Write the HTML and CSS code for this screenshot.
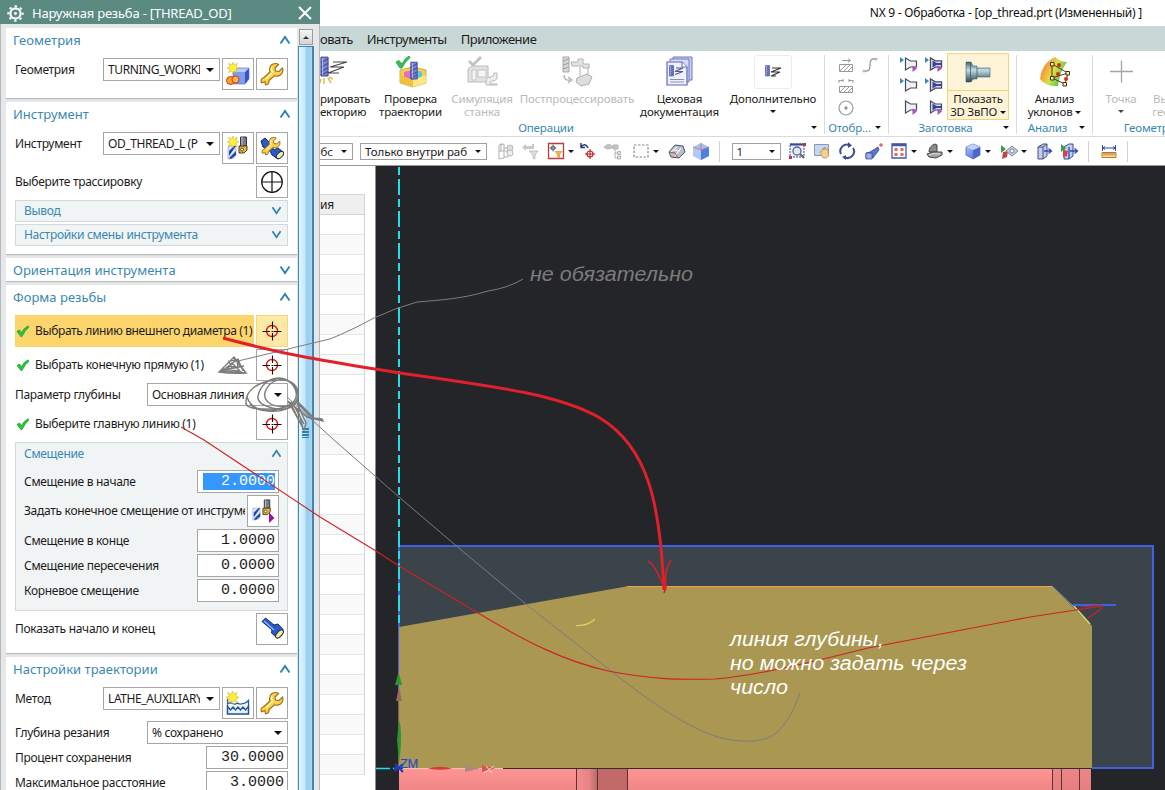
FILE: index.html
```html
<!DOCTYPE html>
<html lang="ru">
<head>
<meta charset="utf-8">
<title>NX 9 - Обработка</title>
<link rel="stylesheet" href="styles.css">
</head>
<body>
<svg class="defs" width="0" height="0">
  <defs>
    <linearGradient id="gPink" x1="0" y1="0" x2="0" y2="1"><stop offset="0" stop-color="#ff9494"/><stop offset="1" stop-color="#ee8686"/></linearGradient>
    <linearGradient id="gDark" x1="0" y1="0" x2="1" y2="0"><stop offset="0" stop-color="#f58c8c"/><stop offset=".6" stop-color="#e88484"/><stop offset="1" stop-color="#b86a6a"/></linearGradient>
    <linearGradient id="gSteel" x1="0" y1="0" x2="0" y2="1"><stop offset="0" stop-color="#3c6272"/><stop offset=".4" stop-color="#c4dde6"/><stop offset="1" stop-color="#2c4a5a"/></linearGradient>
    <linearGradient id="gRain" x1="0" y1="0" x2="1" y2=".5"><stop offset="0" stop-color="#e8503a"/><stop offset=".35" stop-color="#f5a83c"/><stop offset=".6" stop-color="#d8e04a"/><stop offset="1" stop-color="#3cc050"/></linearGradient>
    <linearGradient id="gCube" x1="0" y1="0" x2="1" y2="1"><stop offset="0" stop-color="#a9c6fa"/><stop offset="1" stop-color="#4660d8"/></linearGradient>
    <symbol id="up" viewBox="0 0 12 10"><path d="M1.500 8.500 6 2l4.500 6.500" fill="none" stroke="#2c83b0" stroke-width="1.900"/></symbol>
    <symbol id="down" viewBox="0 0 12 10"><path d="M1.500 1.500 6 8l4.500-6.500" fill="none" stroke="#2c83b0" stroke-width="1.900"/></symbol>
    <symbol id="check" viewBox="0 0 14 12"><path d="M1 6.500 3.500 5l2 2.500Q8 3 12 .8L13 2Q8.500 6 6 11.500H4.800Z" fill="#2fc43c" stroke="#149a28" stroke-width=".7"/></symbol>
    <symbol id="target" viewBox="0 0 20 20"><circle cx="10" cy="10" r="5.500" fill="none" stroke="#d81818" stroke-width="1.400"/><path d="M10.500 .5V8M10.500 12v7.500M.5 10.500H8M12 10.500h7.500M9.500 10.500h2" stroke="#111" stroke-width="1.100"/></symbol>
    <symbol id="wrench" viewBox="0 0 24 24"><path d="M12 2.500Q16 .5 18.500 2.500L15 6l.5 3 3.500.5 3.500-3.500Q24 10 20.500 13q-3 2-6 .8L9 18.500q.5 4-3.500 4.300l-.5-3-3.500 1Q0 17 4 15.500L10 10Q8.500 5 12 2.500Z" fill="#f8d04c" stroke="#9a6a14" stroke-width="1.100"/><path d="M12 5q-1.500 3 .8 5L6 17" fill="none" stroke="#fff6b0" stroke-width="1.300"/></symbol>
    <symbol id="star" viewBox="0 0 14 14"><path d="M7 0 8.300 3.500 12 1.500 10.500 5.200 14 7 10.500 8.300 12 12.300 8.300 10.500 7 14 5.500 10.500 1.800 12.300 3.500 8.300 0 7 3.500 5.500 1.800 1.500 5.500 3.500Z" fill="#ffef3a" stroke="#b9a22a" stroke-width=".5"/></symbol>
    <symbol id="geom" viewBox="0 0 24 24"><path d="M7 10 12 6h11l-4 4Z" fill="#b7ccf8"/><path d="M7 10h12v12H7Z" fill="#7d9cf0"/><path d="M19 10l4-4v11l-4 5Z" fill="#3d50c8"/><path d="M7 10 12 6h11v11l-4 5H7Z" fill="none" stroke="#5065c0" stroke-width=".6"/><circle cx="4.500" cy="18.500" r="4" fill="#f8a02c" stroke="#c8381c"/><circle cx="9.500" cy="17.500" r="3.500" fill="#ffb840" stroke="#c8381c"/><use href="#star" x="1" y="0" width="12" height="12"/></symbol>
    <symbol id="tool" viewBox="0 0 24 24"><path d="M2 10h8v9q-1 4-6 4H2Z" fill="#dbe6fa" stroke="#7d8fb5" stroke-width=".5"/><path d="M3 15 8 10h2L3 20ZM3 22l7-7v4l-5 4Z" fill="#2345a8"/><path d="M14.500 1h6v9h-6Z" fill="#777c86" stroke="#30343c"/><path d="M16 1v9" stroke="#c7cad0"/><path d="M13 10h8v4l-3 3h-5Z" fill="#f0b82e" stroke="#4e3a14"/><circle cx="16" cy="13.500" r="1.500" fill="#fff" stroke="#333" stroke-width=".8"/></symbol>
    <symbol id="toolnew" viewBox="0 0 24 24"><use href="#tool" width="24" height="24"/><use href="#star" x="1" y="0" width="12" height="12"/></symbol>
    <symbol id="toolend" viewBox="0 0 24 24"><use href="#tool" width="22" height="22"/><path d="M18 13.500 23.500 19 18 24Z" fill="#a010a0"/></symbol>
    <symbol id="torch" viewBox="0 0 24 24"><path d="M2 4.500 5.500 1 14 8l4-1 5 5.500q1 6-6 8.500l-5.500-5 .5-3Z" fill="#2c58c8" stroke="#122a70"/><path d="M4 4 14 13" stroke="#8fb4f8" stroke-width="1.500"/><ellipse cx="19.500" cy="17" rx="2.500" ry="5" transform="rotate(42 19.500 17)" fill="#f6ee90" stroke="#1a2a60"/></symbol>
    <symbol id="torchwrench" viewBox="0 0 24 24"><path d="M1 5 5 2l5 5 4 7 4-2 5 4q0 5-5 7l-6-4-2-4-7-4Z" fill="#2c58c8" stroke="#122a70"/><ellipse cx="20" cy="19" rx="2.500" ry="4.500" transform="rotate(45 20 19)" fill="#f6ee90" stroke="#1a2a60"/><use href="#wrench" x="1" y="0" width="20" height="20"/></symbol>
    <symbol id="method" viewBox="0 0 24 24"><path d="M1.500 8v5q2.500-2 5-.5 2.500 1.500 5-.5 2.500 2 5 .5 3 .5 6-3V14" fill="none" stroke="#285a9a" stroke-width="1.300"/><path d="M1.500 14.500h21V23h-21Z" fill="#e6f2fc"/><path d="M1.500 14v9h21v-9" fill="none" stroke="#1f4f96" stroke-width="1.500"/><path d="M2 16l2.500 3L7 16l2.500 3 2.500-3 2.500 3 2.500-3 2.500 3 2.500-3" fill="none" stroke="#1f4f96" stroke-width="1.400"/><use href="#star" x="0" y="0" width="13" height="13"/></symbol>
    <symbol id="gear" viewBox="0 0 16 16"><circle cx="8" cy="8" r="4.800" fill="none" stroke="#fff" stroke-width="2"/><circle cx="8" cy="8" r="1.300" fill="#fff"/><circle cx="8" cy="8" r="6.800" fill="none" stroke="#fff" stroke-width="1.800" stroke-dasharray="2.300 3.040" stroke-dashoffset="1.100"/></symbol>
    <symbol id="mill" viewBox="0 0 10 24"><path d="M1 1h8v21H1Z" fill="#7482d0" stroke="#343c88"/><path d="M1 7 9 3M1 12l8-4M1 17l8-4M1 21l8-4" stroke="#3a4288" stroke-width="1.100"/><path d="M3 2v19" stroke="#c0c8f4"/></symbol>
    <symbol id="part" viewBox="0 0 18 16"><path d="M5.500 2v12l5-3h6V5h-6Z" fill="#eff1f3" stroke="#444c5c" stroke-width="1.200"/><path d="M0 1l4 3-4 3Z" fill="#3f88b4"/></symbol>
    <symbol id="pfill" viewBox="0 0 18 16"><path d="M5.500 2v12l5-3h6V5h-6Z" fill="#d9ddf2" stroke="#444c5c" stroke-width="1.200"/><path d="M7.500 4.500v7l4-2.500h5V7h-5Z" fill="#3940a0"/></symbol>
    <symbol id="out" viewBox="0 0 18 16"><path d="M12.500 9.500 17 12.500 12.500 16Z" fill="#b04cc0"/></symbol>
    <symbol id="shape" viewBox="0 0 18 16"><path d="M5.500 2v12l5-3h6V5h-6Z" fill="#eff1f3" stroke="#444c5c" stroke-width="1.200"/></symbol>
  </defs>
</svg>

<main class="app">
  <aside class="dialog">
    <header class="dlg-title"><svg width="17" height="17"><use href="#gear"/></svg><span>Наружная резьба - [THREAD_OD]</span><svg class="close" width="14" height="14" viewBox="0 0 14 14"><path d="M1 1l12 12M13 1 1 13" stroke="#fff" stroke-width="2"/></svg></header>
    <div class="dlg-body">
      <div class="cards">
        <section class="card">
          <h2><span>Геометрия</span><svg width="12" height="10"><use href="#up"/></svg></h2>
          <div class="row"><label>Геометрия</label><div class="select mid"><span>TURNING_WORKI</span><i class="caret"></i></div><button><svg><use href="#geom"/></svg></button><button><svg><use href="#wrench"/></svg></button></div>
        </section>
        <section class="card">
          <h2><span>Инструмент</span><svg width="12" height="10"><use href="#up"/></svg></h2>
          <div class="row"><label>Инструмент</label><div class="select mid"><span>OD_THREAD_L (P</span><i class="caret"></i></div><button><svg><use href="#toolnew"/></svg></button><button><svg><use href="#torchwrench"/></svg></button></div>
          <div class="row center"><label>Выберите трассировку</label><button><svg viewBox="0 0 24 24"><circle cx="12" cy="12" r="10.300" fill="none" stroke="#111" stroke-width="1.200"/><path d="M12 1.500v21M1.500 12h21" stroke="#111" stroke-width="1.200"/></svg></button></div>
          <div class="fold"><span>Вывод</span><svg width="11" height="9"><use href="#down"/></svg></div>
          <div class="fold"><span>Настройки смены инструмента</span><svg width="11" height="9"><use href="#down"/></svg></div>
        </section>
        <section class="card folded">
          <h2><span>Ориентация инструмента</span><svg width="12" height="10"><use href="#down"/></svg></h2>
        </section>
        <section class="card">
          <h2><span>Форма резьбы</span><svg width="12" height="10"><use href="#up"/></svg></h2>
          <div class="row center active"><label><svg class="ok"><use href="#check"/></svg>Выбрать линию внешнего диаметра (1)</label><button><svg class="tg"><use href="#target"/></svg></button></div>
          <div class="row center"><label><svg class="ok"><use href="#check"/></svg>Выбрать конечную прямую (1)</label><button><svg class="tg"><use href="#target"/></svg></button></div>
          <div class="row"><label>Параметр глубины</label><div class="select wide"><span>Основная линия</span><i class="caret"></i></div></div>
          <div class="row center"><label><svg class="ok"><use href="#check"/></svg>Выберите главную линию (1)</label><button><svg class="tg"><use href="#target"/></svg></button></div>
          <div class="sub">
            <h3><span>Смещение</span><svg width="11" height="9"><use href="#up"/></svg></h3>
            <div class="row"><label>Смещение в начале</label><div class="num sel"><span>2.0000</span></div></div>
            <div class="row center"><label class="clip">Задать конечное смещение от инструме</label><button><svg><use href="#toolend"/></svg></button></div>
            <div class="row"><label>Смещение в конце</label><div class="num">1.0000</div></div>
            <div class="row"><label>Смещение пересечения</label><div class="num">0.0000</div></div>
            <div class="row"><label>Корневое смещение</label><div class="num">0.0000</div></div>
          </div>
          <div class="row center"><label>Показать начало и конец</label><button><svg><use href="#torch"/></svg></button></div>
        </section>
        <section class="card last">
          <h2><span>Настройки траектории</span><svg width="12" height="10"><use href="#up"/></svg></h2>
          <div class="row"><label>Метод</label><div class="select mid"><span>LATHE_AUXILIARY</span><i class="caret"></i></div><button><svg><use href="#method"/></svg></button><button><svg><use href="#wrench"/></svg></button></div>
          <div class="row"><label>Глубина резания</label><div class="select wide"><span>% сохранено</span><i class="caret"></i></div></div>
          <div class="row"><label>Процент сохранения</label><div class="num">30.0000</div></div>
          <div class="row"><label>Максимальное расстояние</label><div class="num">3.0000</div></div>
        </section>
      </div>
      <div class="scroll"><div class="sb-up"><i></i></div><div class="thumb"><div class="grip"></div></div></div>
    </div>
  </aside>

  <div class="work">
    <header class="win-title">NX 9 - Обработка - [op_thread.prt (Измененный) ]</header>
    <nav class="menu"><span>овать</span><span>Инструменты</span><span>Приложение</span></nav>
    <div class="ribbon">
      <section class="group g-ops">
        <div class="tiles">
          <div class="tile first"><svg width="34" height="34" viewBox="0 0 34 34"><use href="#mill" x="0" y="1" width="9" height="22"/><path d="M13 7h14L10 12h14L8 18h11" fill="none" stroke="#444" stroke-width="1.100"/><path d="M1 24l-1 4M4 23v6M8 23l3 5M9 22l4 2" stroke="#d8c050" stroke-width="1.500"/></svg><span>рировать<br>екторию</span></div>
          <div class="tile"><svg width="34" height="34" viewBox="0 0 34 34"><path d="M6 15l12-3 14 3v13l-13 4-13-4Z" fill="#f3d34a" stroke="#b8962c" stroke-width=".7"/><path d="M10 17l8-2 10 2v8l-9 2-9-2Z" fill="#e070c0"/><path d="M18 15l10 2v8l-9 1Z" fill="#5cc8dc"/><path d="M6 20l13 5v7L6 28Z" fill="#f0c23c"/><path d="M19 25l13-5v8l-13 4Z" fill="#ffe684"/><use href="#mill" x="16" y="6" width="8" height="20"/><path d="M2 7l3-1.500L8 9Q11 3 15 1l1 1.500Q10 8 8 13H6Z" fill="#34c254" stroke="#1a9a38" stroke-width=".8"/></svg><span>Проверка<br>траектории</span></div>
          <div class="tile off"><svg width="34" height="34" viewBox="0 0 34 34"><path d="M3 14l4-3h16v16H3Z" fill="#e2e2e2" stroke="#bcbcbc"/><path d="M7 15h4v10H7ZM13 15h8v7h-8Z" fill="#f6f6f6" stroke="#c4c4c4"/><path d="M21 27q0-5 5-5 3 0 3-4h3v4q0 4-5 4-2 0-2 3h7v1H21Z" fill="#eee" stroke="#b8b8b8"/><path d="M4 6l4 4 8-8" fill="none" stroke="#c2c2c2" stroke-width="3"/></svg><span>Симуляция<br>станка</span></div>
          <div class="tile off"><svg width="34" height="34" viewBox="0 0 34 34"><path d="M3 2h6v15H3Z" fill="#d6d6d6" stroke="#a8a8a8"/><path d="M3 6l6-2M3 10l6-2M3 14l6-2" stroke="#a0a0a0"/><path d="M11 7h7V4h5v5h6v4h-6v-2H12ZM20 12v9M28 13v7" fill="#e4e4e4" stroke="#b0b0b0"/><path d="M17 23l10-4 5 3-3 7-8 2-5-4Z" fill="#ddd" stroke="#b0b0b0"/><path d="M4 20q0 6 6 5M8 22l4 3-4 3" fill="none" stroke="#b4b4b4" stroke-width="1.500"/></svg><span>Постпроцессировать</span></div>
          <div class="tile"><svg width="34" height="34" viewBox="0 0 34 34"><path d="M10 2h19v23H10Z" fill="#c9cdf4" stroke="#7278bc"/><path d="M7 4h19v23H7Z" fill="#d9dcf8" stroke="#7278bc"/><path d="M4 7h15l5 5v18H4Z" fill="#eef0fe" stroke="#6068b4" stroke-width="1.200"/><path d="M19 7v5h5" fill="#fff" stroke="#6068b4"/><use href="#mill" x="6" y="10" width="5" height="12"/><path d="M13 13h7l-8 3.500h8l-8 3" fill="none" stroke="#555c88" stroke-width="1.200"/><path d="M7 24.500h14M7 27h14" stroke="#8a90b8"/></svg><span>Цеховая<br>документация</span></div>
          <div class="tile more"><div class="frame"><svg width="18" height="16" viewBox="0 0 18 16"><use href="#mill" x="1" y="1" width="5" height="12"/><path d="M8 4h9L7 8h9l-9 4h5" fill="none" stroke="#333" stroke-width="1.200"/></svg></div><span>Дополнительно</span><i class="caret s"></i></div>
        </div>
        <footer><b>Операции</b><i class="caret s"></i></footer>
      </section>
      <section class="group g-disp">
        <div class="mini disp">
          <svg viewBox="0 0 16 16"><path d="M1.500 7.500h13v7h-13ZM2 14l6-6M6 14l6-6M10 14l4-4M4 3.500h8M10 1.500l2.500 2-2.500 2" fill="none" stroke="#999"/></svg>
          <svg viewBox="0 0 16 16"><path d="M1 14h4q3 0 3-6t3-6h4" fill="none" stroke="#999" stroke-width="1.300"/><circle cx="2" cy="14" r="1.500" fill="#bbb"/><circle cx="14" cy="2" r="1.500" fill="#bbb"/><circle cx="8" cy="8" r="1.300" fill="#bbb"/></svg>
          <svg viewBox="0 0 16 16"><path d="M1.500 8.500h13v6h-13ZM2 14l5-5M6 14l5-5M10 14l4-4M1 5V2M15 5V2M1 2.500h4M11 2.500h4M5 1v3M11 1v3" fill="none" stroke="#999"/></svg><i></i>
          <svg viewBox="0 0 16 16"><circle cx="8" cy="8" r="7" fill="none" stroke="#999" stroke-width="1.200"/><path d="M8 6v4M6 8h4" stroke="#888" stroke-width="1.200"/></svg>
        </div>
        <footer><b>Отобр...</b><i class="caret s"></i></footer>
      </section>
      <section class="group g-blank">
        <div class="blank">
          <div class="mini parts">
            <svg viewBox="0 0 18 16"><use href="#part"/><use href="#out"/></svg><svg viewBox="0 0 18 16"><use href="#part"/><use href="#pfill"/><use href="#out"/></svg>
            <svg viewBox="0 0 18 16"><use href="#part"/></svg><svg viewBox="0 0 18 16"><use href="#part"/><use href="#pfill"/></svg>
            <svg viewBox="0 0 18 16"><use href="#shape"/><use href="#out"/></svg><svg viewBox="0 0 18 16"><use href="#pfill"/><use href="#out"/></svg>
          </div>
          <div class="big"><div class="pic"><svg width="26" height="22" viewBox="0 0 26 22"><path d="M1 1h5l2 4h4v2h13v9H12v2H8l-2 3H1Z" fill="url(#gSteel)" stroke="#3c5e6c" stroke-width=".6"/><path d="M5.500 1v20M12 7v9" stroke="#35505e" stroke-width=".7"/></svg></div><span>Показать<br>3D ЗвПО <i class="caret s"></i></span></div>
        </div>
        <footer><b>Заготовка</b><i class="caret s"></i></footer>
      </section>
      <section class="group g-an">
        <div class="tile"><svg width="34" height="34" viewBox="0 0 34 34"><path d="M2 24Q4 8 17 2q6 5 12 5Q22 16 20 31 8 32 2 24Z" fill="url(#gRain)"/><path d="M14 9l16 9-16 5Zm0 14 13 6 3-11" fill="none" stroke="#5a3020"/><path d="M12.500 7.500h3.500v3.500h-3.500ZM28 16.500h3.500V20H28ZM12.500 21.500h3.500V25h-3.500ZM25 27.500h3.500V31H25Z" fill="#fff3a0" stroke="#403010"/><circle cx="21" cy="10" r="2" fill="#d03020"/><circle cx="20" cy="19" r="2" fill="#d03020"/><circle cx="28" cy="24" r="2" fill="#d03020"/></svg><span>Анализ<br>уклонов <i class="caret s"></i></span></div>
        <footer><b>Анализ</b><i class="caret s"></i></footer>
      </section>
      <section class="group g-geo">
        <div class="tiles2"><div class="tile off"><svg width="34" height="34" viewBox="0 0 34 34"><path d="M17.500 5.500v22M6 16.500h23" stroke="#a4a4a4" stroke-width="1.300"/></svg><span>Точка</span><i class="caret s"></i></div><div class="tile off cut"><svg width="34" height="34"></svg><span>Вы<br>гео</span></div></div>
        <footer><b>Геометрия</b></footer>
      </section>
    </div>
    <div class="toolbar">
      <div class="cell w33 start"><div class="combo c1"><span>ибс</span><i class="caret s"></i></div></div>
      <div class="cell w141"><div class="combo c2"><span>Только внутри раб</span><i class="caret s"></i></div></div>
      <div class="cell w24"><svg viewBox="0 0 20 18"><path d="M3 3l5-1v14l-5 1ZM8 6h4v9H8M3 9h9M5 1v8" fill="none" stroke="#b0b0b0"/><circle cx="14" cy="6" r="3" fill="#ddd" stroke="#b8b8b8"/><circle cx="14" cy="11" r="3" fill="#eee" stroke="#b8b8b8"/></svg></div>
      <div class="cell w24"><svg viewBox="0 0 20 18"><path d="M2 5l4-3v2h6V2h2v5H6v2Z" fill="#c8c8c8"/><path d="M9 9h9l-3 4v4l-2-1v-3Z" fill="#ddd" stroke="#b8b8b8" stroke-width=".8"/></svg></div>
      <div class="cell w36"><svg viewBox="0 0 20 18"><path d="M2.500 1.500h15v15h-15Z" fill="#fff" stroke="#c03a3a" stroke-width="1.300"/><circle cx="7" cy="6" r="2" fill="none" stroke="#555"/><path d="M7 2.500v7M3.500 6h7" stroke="#555" stroke-width=".8"/><path d="M9 9.500h7l-2.500 3v3l-2-1v-2Z" fill="#f5b838" stroke="#c88a20" stroke-width=".6"/></svg><i class="caret s"></i></div>
      <div class="cell w20"><svg viewBox="0 0 20 18"><path d="M3 5q4-5 7 1M3 1v4.500h4" fill="none" stroke="#223a7c" stroke-width="1.500"/><circle cx="12" cy="12" r="3" fill="none" stroke="#d02020" stroke-width="1.200"/><path d="M12 7v10M7 12h10" stroke="#a02020"/></svg></div>
      <div class="cell w30"><svg viewBox="0 0 20 18"><path d="M1 5q5-5 9 0-5 4-9 0ZM10 3h5v4h-5Z" fill="#c4c4c4" stroke="#b4b4b4"/><path d="M12 7v9h3M12 11h3" fill="none" stroke="#b4b4b4"/><path d="M14.500 9.500h3v3h-3ZM14.500 14h3v3h-3Z" fill="#e0e0e0" stroke="#b4b4b4"/></svg></div>
      <div class="cell w33"><svg viewBox="0 0 20 18"><path d="M3 3h14v12H3Z" fill="none" stroke="#888" stroke-width="1.200" stroke-dasharray="2.500 1.500"/></svg><i class="caret s"></i></div>
      <div class="cell w32"><svg viewBox="0 0 20 18"><path d="M2 10l6-7 8 1 2 6-6 6-8-1Z" fill="#b9bfca" stroke="#4b5262"/><path d="M4 10l6-5M8 14l6-8M7 8l6 1" stroke="#fff"/><path d="M2 10l6 1 3 5" fill="none" stroke="#c05050"/></svg></div>
      <div class="cell w15"><svg viewBox="0 0 20 18"><path d="M2 5l8-4 8 4v9l-8 4-8-4Z" fill="#9cc4f2"/><path d="M10 8l8-3v9l-8 4Z" fill="#4e80e0"/><path d="M2 5l8 3v10l-8-4Z" fill="#b4c8f8"/><path d="M2 5l8 3 8-3M10 1v7" fill="none" stroke="#e06868" stroke-width=".8"/></svg></div>
      <div class="cell w22"><i class="vsep"></i></div>
      <div class="cell w52"><div class="combo c3"><span>1</span><i class="caret s"></i></div></div>
      <div class="cell w30"><svg viewBox="0 0 20 18"><path d="M3 2h14v13H3Z" fill="#eef2fb" stroke="#2b4aa0" stroke-dasharray="2 1"/><path d="M3 2.500h14" stroke="#2b4aa0" stroke-width="2"/><circle cx="10" cy="9" r="4" fill="#dbeaf4" stroke="#667" stroke-width="1.300"/><path d="M13 12l4 4" stroke="#667" stroke-width="2"/><path d="M2 14h3v3H2ZM16 1h3v3h-3Z" fill="#c83232"/></svg></div>
      <div class="cell w19"><svg viewBox="0 0 20 18"><path d="M2.500 2.500h14v11h-14Z" fill="#c6d6ee" stroke="#8a98b4"/><path d="M8 10l2-1 1-3 1 2 1-3 1 3 2-2v4l1 4-3 2h-3Z" fill="#f4cf94" stroke="#b98a4c" stroke-width=".7"/></svg></div>
      <div class="cell w32"><svg viewBox="0 0 20 18"><path d="M4 12A6.500 6.500 0 0 1 12 3M16 6a6.500 6.500 0 0 1-8 9.500" fill="none" stroke="#3c508e" stroke-width="2"/><path d="M11 0l4 3.500L11 6ZM9 13v5l-4-3Z" fill="#3c508e"/></svg></div>
      <div class="cell w22"><svg viewBox="0 0 20 18"><path d="M2 11l4-1 8-5 1 3-6 8H2Z" fill="#5a74d4" stroke="#2f4290" stroke-width=".7"/><path d="M2 11h6v6H2Z" fill="#97acf0" stroke="#2f4290" stroke-width=".7"/><path d="M17 1v4M15 3h4" stroke="#d04040"/></svg></div>
      <div class="cell w36"><svg viewBox="0 0 20 18"><path d="M3 2h14v14H3Z" fill="#fff" stroke="#4058a8" stroke-width="1.300"/><path d="M3 3h14" stroke="#4058a8" stroke-width="2.500"/><path d="M5.500 6h3v3h-3ZM11.500 6h3v3h-3ZM5.500 11h3v3h-3ZM11.500 11h3v3h-3Z" fill="#e06a58"/></svg><i class="caret s"></i></div>
      <div class="cell w36"><svg viewBox="0 0 20 18"><path d="M4 10Q4 4 10 2l2 1v7Z" fill="#8c8c8c" stroke="#444"/><path d="M2 12l6-2 9 0v3l-6 3-7-1Z" fill="#a4a4a4" stroke="#444"/><path d="M4 13l5-1.500 6 .5" fill="none" stroke="#e0e0e0"/></svg><i class="caret s"></i></div>
      <div class="cell w40"><svg viewBox="0 0 20 18"><path d="M3 5l7-3 7 3v8l-7 4-7-4Z" fill="url(#gCube)" stroke="#5064b0" stroke-width=".8"/><path d="M10 8l7-3v8l-7 4Z" fill="#4e66c4"/><path d="M3 5l7-3 7 3-7 3Z" fill="#c2d0f8"/></svg><i class="caret s"></i></div>
      <div class="cell w31"><svg viewBox="0 0 20 18"><path d="M2 3l5 4-5 4Z" fill="#38a04a"/><path d="M4 10l5-1-1 6-5 2Z" fill="#c84444"/><path d="M7 9l6-5 6 5-6 5Z" fill="#c8d0e2" stroke="#75809a"/><circle cx="13" cy="9" r="2" fill="#fff" stroke="#75809a"/></svg><i class="caret s"></i></div>
      <div class="cell w32"><svg viewBox="0 0 20 18"><path d="M4 5l5-3h4v12l-4 3H4Z" fill="#c5cee8" stroke="#3f4f80"/><path d="M4 5h5v12M9 5l4-3" fill="none" stroke="#3f4f80"/><path d="M10 9h7M14.500 6.500l3 2.500-3 2.500" fill="none" stroke="#2c48c0" stroke-width="1.300"/></svg></div>
      <div class="cell w19"><svg viewBox="0 0 20 18"><path d="M4 5l5-3h4v12l-4 3H4Z" fill="#c5cee8" stroke="#3f4f80"/><path d="M1 2l5 4-5 4Z" fill="#38a04a"/><path d="M3 8l5 1-1 5-4 1Z" fill="#d04444"/><path d="M9 5v12M10 9h7M14.500 6.500l3 2.500-3 2.500" fill="none" stroke="#2c48c0" stroke-width="1.300"/></svg></div>
      <div class="cell w18"><i class="vsep"></i></div>
      <div class="cell w24"><svg viewBox="0 0 20 18"><path d="M3.500 3v6M16.500 3v6M4 6h12M6 4.500 4 6l2 1.500M14 4.500 16 6l-2 1.500" fill="none" stroke="#2c48a0"/><path d="M3 10.500h14v5H3Z" fill="#f8e08c" stroke="#b87830"/><path d="M5 11v2.500M7 11v2.500M9 11v2.500M11 11v2.500M13 11v2.500M15 11v2.500" stroke="#b04040" stroke-width=".8"/></svg></div>
      <div class="cell w12"><i class="vsep"></i></div>
    </div>
    <div class="stage">
      <div class="nav"><div class="nav-head">ия</div><div class="nav-rows"></div></div>
      <svg class="view" width="789" height="624" viewBox="376 166 789 624">
        <path d="M399 546H1153V768H399Z" fill="#3b444b" stroke="#4160e6" stroke-width="2"/>
        <path d="M399 627 629 586H1052L1092 626V768H399Z" fill="#a99752"/>
        <path d="M627 586.500H1052" stroke="#eba24c" stroke-width="1.200"/>
        <path d="M1052 586 1073 606" stroke="#8592a0"/><path d="M1073 605 1090 624" stroke="#d6dc70" stroke-width="1.500"/>
        <path d="M1073 605H1116" stroke="#4160e6" stroke-width="2"/>
        <path d="M576 625.500Q588 626 595 619" fill="none" stroke="#d6d75c" stroke-width="1.200"/>
        <path d="M399 769H1091V790H399Z" fill="url(#gPink)"/>
        <path d="M577 769H597V790H577Z" fill="url(#gDark)"/><path d="M597 769H627V790H597Z" fill="#c26a6a"/><path d="M1053 769H1091V790H1053Z" fill="#e07c7c" opacity=".6"/>
        <path d="M576.500 769V790M627.500 769V790M597.500 769V790M1052.500 769V790M1061.500 769V790M1079.500 769V790" stroke="#5a3434"/>
        <path d="M399 768.500H1092" stroke="#332e2a"/>
        <path d="M399 546V627" stroke="#4160e6" stroke-width="2"/>
        <path d="M399 167V626" stroke="#22dfe6" stroke-width="2" stroke-dasharray="8 4 16 4"/>
        <path d="M376 768.500H390M393 768.500H397" stroke="#22dfe6" stroke-width="1.500"/>
        <path d="M398.500 690V768" stroke="#80604c"/><path d="M398.500 672 402 685H395Z" fill="#2c9432"/><path d="M399 687 402 701H396Z" fill="#9a6a5c"/><path d="M399 720Q402 728 400.500 750L399 764 397 740Z" fill="#2c9432"/>
        <path d="M399 768.500H503" stroke="#efc4bc"/><path d="M428 768.500Q440 765 452 768.500 440 771 428 768.500Z" fill="#d43c3c"/><path d="M465 765.500 480 768.500 465 772Z" fill="#ad8880"/><path d="M482 765 495 768.500 482 772Z" fill="#e05450"/><path d="M484 773l10-7M486 766l6 7" stroke="#ddd"/>
        <path d="M395 764l8 8M403 764l-8 7M394 768h9" stroke="#1c3cc0" stroke-width="2"/>
        <text class="axis" x="400" y="768" textLength="18" lengthAdjust="spacingAndGlyphs">ZM</text>
      </svg>
    </div>
  </div>

  <svg class="notes" width="1165" height="790" viewBox="0 0 1165 790">
    <g class="grey">
      <path d="M523 279Q508 288 488 291C462 299 440 300 417 302Q395 308 374 318 350 331 330 339 304 345 280 351L238 361"/>
      <path class="dense" d="M219 372 234 357 246 373Q232 374 219 372ZM233 357 246 373 222 371 238 359 243 371M229 366l9 1-1-7-8 1 3 8M224 370l20-4M222 369l18 2-8-8-6 8"/>
      <path class="dense" d="M246 402C246 390 258 382 275 380 292 378 299 386 298 396 296 408 280 414 262 410 252 408 245 407 246 402ZM258 396C260 386 268 378 280 378 291 379 299 389 298 398 297 407 285 412 272 408 264 406 257 402 258 396ZM265 392C270 379 284 376 292 384 300 394 296 404 286 406 273 408 263 402 265 392ZM247 397Q254 418 292 405M250 404q10 10 28 5"/>
      <path d="M287 397 334 440 399 497 460 549 527 605 611 671C650 702 690 729 718 737 740 743 763 743 775 734 789 722 794 708 800 693"/>
      <path class="dense" d="M290 402 304 430 306 423 297 403 312 418 322 419 323 421 307 417 288 401 303 428 299 413 291 402M296 400 312 416M293 404l11 20"/>
    </g>
    <path class="thin" d="M181 427 204 440 320 517 376 551 399 566 478 613C530 644 565 661 608 671 650 679 675 680 715 679 760 675 812 662 868 648L1030 617 1102 606M1081 607 1101 605V609L1088 618"/>
    <path class="thick" d="M223 338C290 356 330 362 400 373 500 387 560 395 600 418 649 448 660 505 664 590"/>
    <path class="tip" d="M648 561Q655 564 665 590L664 593 666 588Q664 570 671 560"/>
    <text class="note dim" x="530" y="281" textLength="163" lengthAdjust="spacingAndGlyphs">не обязательно</text>
    <text class="note" x="730" y="646" textLength="154" lengthAdjust="spacingAndGlyphs">линия глубины,</text>
    <text class="note" x="730" y="670" textLength="237" lengthAdjust="spacingAndGlyphs">но можно задать через</text>
    <text class="note" x="730" y="694" textLength="58" lengthAdjust="spacingAndGlyphs">число</text>
  </svg>
</main>
</body>
</html>
```
FILE: styles.css
```css
* { box-sizing: border-box; }
body { margin: 0; background: #fff; font: 12px/15px "Noto Sans", "Open Sans", sans-serif; color: #1c1c20; letter-spacing: -0.3px; }
.defs { position: absolute; }
.app { position: relative; display: flex; width: 1165px; height: 790px; overflow: hidden; }

/* Operation dialog */
.dialog { width: 320px; flex: none; display: flex; flex-direction: column; background: #e6e7e8; border-right: 1px solid #b4b8ba; }
.dlg-title { height: 24px; flex: none; margin-right: -1px; background: #5b8a83; color: #fff; display: flex; align-items: center; gap: 8px; padding: 2px 8px 0 7px; font-size: 13px; letter-spacing: -0.2px; }
.close { margin-left: auto; }
.dlg-body { flex: 1; min-height: 0; display: flex; gap: 1px; padding: 4px 0 0 5px; border-left: 1px solid #b4b8ba; }
.cards { width: 291px; flex: none; display: flex; flex-direction: column; gap: 4px; overflow: hidden; }
.card { flex: none; background: #fff; padding: 0 9px 8px; display: flex; flex-direction: column; gap: 2px; box-shadow: 0 1px 1px #b8bbbd; }
.card.folded { height: 23px; padding-bottom: 0; }
.card h2 { margin: 0 -3px 4px -2px; height: 24px; flex: none; display: flex; align-items: center; justify-content: space-between; font-weight: 400; font-size: 13px; color: #3a87b0; letter-spacing: 0.02px; }
.card.folded h2 { margin-bottom: 0; }
.row { display: flex; gap: 2px; align-items: flex-start; }
.row label { flex: 1; line-height: 23px; white-space: nowrap; display: flex; align-items: center; }
.row.center { align-items: center; }
.row.center label { line-height: 32px; }
.row label.clip { overflow: hidden; display: block; }
.ok { width: 14px; height: 12px; margin: 0 5px 0 1px; flex: none; }
.row.active label { background: #fcd66c; letter-spacing: -0.36px; }
.active button { background: #fce9a8; border-color: #f4d67c; }
button { width: 32px; height: 32px; flex: none; padding: 0; background: #fff; border: 1px solid #a6a6a6; display: flex; align-items: center; justify-content: center; }
button svg { width: 24px; height: 24px; flex: none; }
button svg.tg { width: 20px; height: 20px; }
.select { height: 23px; flex: none; border: 1px solid #a6a6a6; background: #fff; display: flex; align-items: center; justify-content: space-between; padding: 0 5px 0 4px; }
.select span { overflow: hidden; white-space: nowrap; }
.select.mid { width: 117px; }
.select.mid span { width: 92px; letter-spacing: -0.4px; }
.select.wide { width: 141px; }
.caret { width: 0; height: 0; flex: none; border: 4px solid transparent; border-top-color: #111; border-bottom: 0; display: inline-block; }
.caret.s { border-width: 3px; border-bottom: 0; }
.num { width: 82px; height: 23px; flex: none; border: 1px solid #a6a6a6; background: #fff; padding: 0 3px; font: 15px/21px "Liberation Mono", monospace; letter-spacing: 0; text-align: right; }
.num.sel { padding: 2px 3px 2px 5px; line-height: 17px; }
.num.sel span { display: block; background: #3397fc; color: #fff; }
.fold, .sub { border: 1px solid #d3d9da; background: #f0f4f5; color: #3a87b0; }
.fold { height: 22px; display: flex; align-items: center; justify-content: space-between; padding: 0 5px 1px 8px; }
.sub { height: 169px; padding: 0 8px; display: flex; flex-direction: column; gap: 2px; }
.sub .row { color: #1c1c20; }
.sub h3 { margin: 0 -3px 4px 0; height: 21px; display: flex; align-items: center; justify-content: space-between; font-size: 12px; font-weight: 400; }
.scroll { width: 16px; display: flex; flex-direction: column; align-items: center; gap: 1px; padding-top: 1px; }
.sb-up { width: 14px; height: 16px; flex: none; border: 1px solid #9a9da0; background: linear-gradient(#f6f6f6, #d2d4d6); display: flex; align-items: center; justify-content: center; }
.sb-up i { border: 3px solid transparent; border-top: 0; border-bottom-color: #333; }
.thumb { width: 16px; flex: 1; border: 2px solid #4284ac; border-width: 1px 2px 0 1px; background: linear-gradient(90deg, #e2f5fd, #c4e8fa 45%, #98ccee 60%, #a8d6f2); padding: 381px 3px 0; }
.grip { height: 10px; background: repeating-linear-gradient(#2d7fae 0 2px, transparent 2px 3px); }

/* Main window */
.work { flex: 1; min-width: 0; display: flex; flex-direction: column; }
.win-title { height: 26px; flex: none; text-align: right; padding-right: 23px; line-height: 26px; color: #111; letter-spacing: -0.24px; }
.menu { height: 25px; flex: none; background: #c8d8d6; display: flex; gap: 14px; font-size: 13px; line-height: 26px; letter-spacing: -0.5px; }
.ribbon { height: 86px; flex: none; display: flex; border-bottom: 1px solid #dadada; font-size: 11.5px; overflow: hidden; letter-spacing: -0.15px; }
.group { flex: none; display: flex; flex-direction: column; justify-content: space-between; border-right: 1px solid #dadada; margin: 4px 0 2px; }
.group footer { height: 14px; position: relative; display: flex; justify-content: center; align-items: center; color: #3a87b0; }
.group footer b { font-weight: 400; }
.group footer .caret { position: absolute; right: 7px; top: 6px; }
.g-ops { width: 505px; } .g-disp { width: 64px; } .g-blank { width: 128px; } .g-an { width: 76px; } .g-geo { width: 160px; border: 0; }
.g-ops footer { padding-right: 52px; }
.g-disp footer, .g-blank footer, .g-an footer { padding-right: 14px; }
.g-geo footer { padding-right: 40px; }
.tiles { display: grid; grid-template-columns: 52px 77px 66px 124px 81px 106px; }
.tile { display: flex; flex-direction: column; align-items: center; white-space: nowrap; text-align: center; line-height: 13px; color: #1c1c20; }
.tile span { margin-top: 3px; }
.tile.first { align-items: flex-start; letter-spacing: -0.25px; }
.tile.first span { text-align: left; }
.tile > .caret { margin-top: 5px; }
.tile.off { color: #b9b9b9; }
.tile.off .caret { border-top-color: #444; }
.frame { width: 38px; height: 34px; border: 1px solid #ececec; border-radius: 3px; display: flex; align-items: center; justify-content: center; }
.mini { display: grid; align-items: center; justify-items: center; }
.mini svg { width: 18px; height: 16px; }
.disp { grid-template-columns: 24px 24px; grid-template-rows: 20px 22px 21px; margin-left: 9px; }
.blank { display: flex; margin-top: -2px; height: 68px; }
.parts { grid-template-columns: 24px 26px; grid-template-rows: 21px 22px 22px; margin-left: 8px; align-content: start; }
.big { width: 62px; background: #fdf4d8; border: 1px solid #f0d478; display: flex; flex-direction: column; text-align: center; line-height: 13px; white-space: nowrap; letter-spacing: -0.2px; }
.pic { height: 37px; border-bottom: 1px solid #f0d478; display: flex; align-items: center; justify-content: center; }
.big span { padding-top: 1px; }
.tile .caret, .big .caret { vertical-align: 2px; }
.tiles2 { display: flex; gap: 8px; padding-left: 11px; }
.tile.cut { width: 30px; }
.toolbar { height: 29px; flex: none; display: flex; border-bottom: 1px solid #999; }
.cell { flex: none; display: flex; align-items: center; justify-content: center; gap: 2px; }
.cell.start { justify-content: flex-start; }
.cell svg { width: 20px; height: 18px; flex: none; }
.w12 { width: 12px; } .w15 { width: 15px; } .w18 { width: 18px; } .w19 { width: 19px; } .w20 { width: 20px; } .w22 { width: 22px; }
.w24 { width: 24px; } .w30 { width: 30px; } .w31 { width: 31px; } .w32 { width: 32px; } .w33 { width: 33px; } .w36 { width: 36px; }
.w40 { width: 40px; } .w52 { width: 52px; } .w141 { width: 141px; }
.vsep { width: 1px; height: 21px; background: #d2d2d2; }
.combo { height: 17px; border: 1px solid #a0a0a0; background: #fff; display: flex; align-items: center; justify-content: space-between; padding: 0 5px 0 4px; font-size: 11.5px; letter-spacing: 0; white-space: nowrap; }
.c1 { width: 33px; border-left: 0; padding-left: 0; }
.c1 span { width: 13px; overflow: hidden; direction: rtl; }
.c2 { width: 127px; }
.c2 span { letter-spacing: -0.1px; }
.c3 { width: 49px; }
.stage { flex: 1; display: flex; min-height: 0; }
.nav { width: 56px; flex: none; padding: 28px 10px 0 0; border-right: 1px solid #8c8c8c; }
.nav-head { height: 21px; background: #efefef; border: 1px solid #d4d4d4; border-left: 0; line-height: 20px; }
.nav-rows { height: 560px; border-right: 1px solid #d4d4d4; background: repeating-linear-gradient(#fff 0 19px, #e4e4e4 19px 20px, #f9f9f9 20px 39px, #e4e4e4 39px 40px); }
.view { flex: none; background: #232529; display: block; }
.axis { font: 13px "Liberation Sans", sans-serif; fill: #2348d8; }

/* Hand-drawn callouts over both windows */
.notes { position: absolute; left: 0; top: 0; pointer-events: none; fill: none; }
.grey path { stroke: #7c7c7c; stroke-width: 1; }
.grey .dense { stroke-width: 1.4; }
.thin { stroke: #cf2222; stroke-width: 1.1; }
.thick { stroke: #e0202a; stroke-width: 3; }
.tip { stroke: #d8202a; stroke-width: 1.5; }
.note { font: italic 20.5px "Liberation Sans", Arial, sans-serif; fill: #fff; letter-spacing: 0; }
.note.dim { fill: #7c7c7c; }
```
